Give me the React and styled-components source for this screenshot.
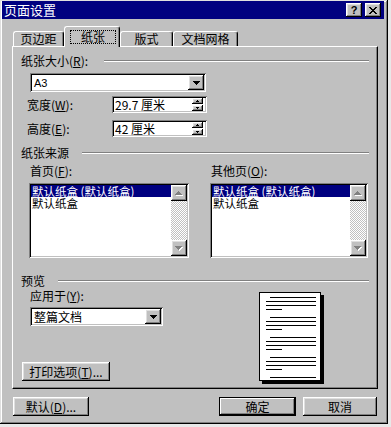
import React from "react"
import styled, { createGlobalStyle, css } from "styled-components"

const GlobalStyle = createGlobalStyle`
  html, body {
    margin: 0;
    padding: 0;
    background: #e8e8e8;
  }
  body {
    font-family: "Noto Sans CJK SC", "Liberation Sans", sans-serif;
    font-size: 12px;
    color: #000;
  }
  u { text-decoration: underline; text-underline-offset: 1px; }
`

const raised = css`
  background: #c0c0c0;
  box-shadow: inset -1px -1px #000, inset 1px 1px #fff, inset -2px -2px #808080, inset 2px 2px #dfdfdf;
`

const sunken = css`
  background: #fff;
  box-shadow: inset 1px 1px #808080, inset -1px -1px #fff, inset 2px 2px #000, inset -2px -2px #c0c0c0;
`

const Window = styled.div`
  box-sizing: border-box;
  width: 388px;
  height: 424px;
  padding: 1px 4px 4px 2px;
  background: #c0c0c0;
  box-shadow: inset -1px -1px #000, inset 1px 1px #dfdfdf, inset -2px -2px #808080, inset 2px 2px #fff;
  display: flex;
  flex-direction: column;
`

const TitleBar = styled.div`
  height: 18px;
  background: #000080;
  display: flex;
  align-items: center;
  padding: 0 3px 0 2px;
`

const TitleText = styled.div`
  flex: 1;
  color: #fff;
  font-size: 13px;
  line-height: 18px;
`

const TitleButton = styled.div`
  ${raised};
  box-sizing: border-box;
  width: 16px;
  height: 14px;
  margin-left: ${p => p.$gap || 0}px;
  display: flex;
  align-items: center;
  justify-content: center;
  font-family: "Liberation Sans", sans-serif;
  font-weight: bold;
  font-size: 11px;
  line-height: 11px;
`

const Body = styled.div`
  padding: 0 6px 0 10px;
  display: flex;
  flex-direction: column;
`

const TabStrip = styled.div`
  margin-top: 7px;
  height: 20px;
  padding-left: 1px;
  display: flex;
  align-items: flex-end;
`

const Tab = styled.div`
  box-sizing: border-box;
  position: relative;
  z-index: ${p => (p.$active ? 2 : 0)};
  width: ${p => p.$w}px;
  height: ${p => (p.$active ? 21 : 15)}px;
  margin-bottom: ${p => (p.$active ? -1 : 0)}px;
  background: #c0c0c0;
  border-top: 1px solid #fff;
  border-left: 1px solid #fff;
  border-right: 1px solid #000;
  border-radius: 3px 3px 0 0;
  box-shadow: inset -1px 0 #808080;
  display: flex;
  align-items: ${p => (p.$active ? "flex-start" : "center")};
  justify-content: center;
  padding-top: ${p => (p.$active ? 3 : 0)}px;
  line-height: 12px;
`

const FocusLabel = styled.div`
  box-sizing: border-box;
  width: 46px;
  height: 14px;
  margin-left: 2px;
  border: 1px dotted #000;
  display: flex;
  align-items: center;
  justify-content: center;
`

const Panel = styled.div`
  box-sizing: border-box;
  height: 343px;
  border-top: 1px solid #fff;
  border-left: 1px solid #fff;
  border-right: 1px solid #000;
  border-bottom: 1px solid #000;
  box-shadow: inset -1px -1px #808080;
  display: flex;
  flex-direction: column;
`

const GroupHeader = styled.div`
  display: flex;
  align-items: center;
  height: 12px;
  margin-top: ${p => p.$top}px;
  padding-left: 8px;
  padding-right: 8px;
  line-height: 12px;
  gap: ${p => p.$gap || 13}px;
`

const Rule = styled.div`
  flex: 1;
  height: 0;
  border-top: 1px solid #808080;
  border-bottom: 1px solid #fff;
`

const Combo = styled.div`
  ${sunken};
  box-sizing: border-box;
  width: ${p => p.$w}px;
  height: 19px;
  margin-top: ${p => p.$top}px;
  margin-left: 17px;
  padding: 2px;
  display: flex;
  align-items: center;
`

const ComboText = styled.div`
  flex: 1;
  padding-left: 2px;
  line-height: 12px;
  font-size: ${p => p.$small ? 11 : 12}px;
  font-family: ${p => p.$small ? `"Liberation Sans", sans-serif` : "inherit"};
`

const DropButton = styled.div`
  ${raised};
  width: 16px;
  height: 15px;
  display: flex;
  align-items: center;
  justify-content: center;
`

const FieldRow = styled.div`
  display: flex;
  align-items: center;
  height: 17px;
  margin-top: ${p => p.$top}px;
  margin-left: 14px;
`

const FieldLabel = styled.div`
  width: 85px;
  line-height: 12px;
`

const SpinField = styled.div`
  ${sunken};
  box-sizing: border-box;
  width: 95px;
  height: 17px;
  padding: 2px 4px 2px 2px;
  display: flex;
  align-items: center;
`

const SpinText = styled.div`
  flex: 1;
  line-height: 12px;
  padding-left: 1px;
  white-space: pre;
`

const SpinStack = styled.div`
  display: flex;
  flex-direction: column;
  gap: 1px;
`

const SpinButton = styled.div`
  ${raised};
  width: 11px;
  height: 6px;
  display: flex;
  align-items: center;
  justify-content: center;
`

const Columns = styled.div`
  display: flex;
  margin-left: 16px;
  margin-top: 6px;
  gap: 21px;
`

const Column = styled.div`
  width: ${p => p.$w}px;
  display: flex;
  flex-direction: column;
`

const SubLabel = styled.div`
  line-height: 12px;
  padding-left: 1px;
  margin-bottom: 6px;
`

const ListBox = styled.div`
  ${sunken};
  box-sizing: border-box;
  height: 75px;
  padding: 2px;
  display: flex;
`

const ListRows = styled.div`
  flex: 1;
  min-width: 0;
  display: flex;
  flex-direction: column;
`

const ListRow = styled.div`
  height: 12px;
  line-height: 12px;
  font-size: 11.5px;
  padding-left: 1px;
  white-space: nowrap;
  background: ${p => (p.$sel ? "#000080" : "transparent")};
  color: ${p => (p.$sel ? "#fff" : "#000")};
`

const ScrollBar = styled.div`
  width: 16px;
  flex: none;
  display: flex;
  flex-direction: column;
  justify-content: space-between;
  background: repeating-conic-gradient(#c0c0c0 0 25%, #fff 0 50%) 0 0 / 2px 2px;
`

const ScrollButton = styled.div`
  ${raised};
  width: 16px;
  height: 16px;
  display: flex;
  align-items: center;
  justify-content: center;
`

const PreviewRow = styled.div`
  display: flex;
`

const PreviewLeft = styled.div`
  width: 246px;
  display: flex;
  flex-direction: column;
`

const ApplyLabel = styled.div`
  line-height: 12px;
  margin-top: 3px;
  margin-left: 17px;
`

const Button = styled.div`
  ${raised};
  box-sizing: border-box;
  width: ${p => p.$w}px;
  height: 19px;
  margin-top: ${p => p.$top || 0}px;
  margin-left: ${p => p.$left || 0}px;
  display: flex;
  align-items: center;
  justify-content: center;
  line-height: 12px;
  white-space: nowrap;
  ${p => p.$default && css`
    box-shadow: inset 0 0 0 1px #000, inset -2px -2px #000, inset 2px 2px #fff, inset -3px -3px #808080;
  `}
`

const Page = styled.div`
  box-sizing: border-box;
  width: 62px;
  height: 89px;
  margin-top: 5px;
  background: #fff;
  border: 1px solid #000;
  box-shadow: 3px 3px 0 #000;
`

const Footer = styled.div`
  display: flex;
  margin-top: 8px;
  padding: 0 1px;
  gap: 7px;
`

const Spacer = styled.div`
  flex: 1;
`

const DownTriangle = ({ color = "#000" }) => (
  <svg width="7" height="4" viewBox="0 0 7 4">
    <path d="M0 0h7v1h-1v1h-1v1h-1v1h-1v-1h-1v-1h-1v-1h-1z" fill={color} />
  </svg>
)

const TinyArrow = ({ up }) => (
  <svg width="3" height="2" viewBox="0 0 3 2">
    <path d={up ? "M1 0h1v1h1v1h-3v-1h1z" : "M0 0h3v1h-1v1h-1v-1h-1z"} fill="#000" />
  </svg>
)

const arrowUp = "M3 0h1v1h1v1h1v1h1v1h-7v-1h1v-1h1v-1h1z"
const arrowDown = "M0 0h7v1h-1v1h-1v1h-1v1h-1v-1h-1v-1h-1v-1h-1z"

const GrayArrow = ({ up }) => (
  <svg width="8" height="5" viewBox="0 0 8 5">
    <path transform="translate(1 1)" d={up ? arrowUp : arrowDown} fill="#fff" />
    <path d={up ? arrowUp : arrowDown} fill="#808080" />
  </svg>
)

const CloseGlyph = () => (
  <svg width="8" height="7" viewBox="0 0 8 7">
    <path
      d="M0 0h2v1h1v1h2v-1h1v-1h2v1h-1v1h-1v1h-1v1h1v1h1v1h1v1h-2v-1h-1v-1h-2v1h-1v1h-2v-1h1v-1h1v-1h1v-1h-1v-1h-1v-1h-1z"
      fill="#000"
    />
  </svg>
)

const PageLines = () => {
  const groups = [0, 20, 40, 60]
  return (
    <svg width="60" height="87" viewBox="0 0 60 87">
      {groups.map(g => (
        <g key={g} fill="#000">
          <rect x="10" y={4 + g} width="46" height="1" />
          <rect x="6" y={8 + g} width="50" height="1" />
          <rect x="6" y={12 + g} width="50" height="1" />
          <rect x="6" y={16 + g} width="16" height="1" />
        </g>
      ))}
      <rect x="10" y="84" width="46" height="1" fill="#000" />
    </svg>
  )
}

const Spin = ({ children }) => (
  <SpinField>
    <SpinText>{children}</SpinText>
    <SpinStack>
      <SpinButton><TinyArrow up /></SpinButton>
      <SpinButton><TinyArrow /></SpinButton>
    </SpinStack>
  </SpinField>
)

const List = ({ rows }) => (
  <ListBox>
    <ListRows>
      {rows.map((r, i) => (
        <ListRow key={i} $sel={i === 0}>{r}</ListRow>
      ))}
    </ListRows>
    <ScrollBar>
      <ScrollButton><GrayArrow up /></ScrollButton>
      <ScrollButton><GrayArrow /></ScrollButton>
    </ScrollBar>
  </ListBox>
)

const tabs = [
  { label: "页边距", w: 51 },
  { label: "纸张", w: 56, active: true },
  { label: "版式", w: 53 },
  { label: "文档网格", w: 65 },
]

const trays = ["默认纸盒 (默认纸盒)", "默认纸盒"]

export default function App() {
  return (
    <>
      <GlobalStyle />
      <Window>
        <TitleBar>
          <TitleText>页面设置</TitleText>
          <TitleButton>?</TitleButton>
          <TitleButton $gap={3}><CloseGlyph /></TitleButton>
        </TitleBar>

        <Body>
          <TabStrip>
            {tabs.map(t => (
              <Tab key={t.label} $w={t.w} $active={t.active}>
                {t.active ? <FocusLabel>{t.label}</FocusLabel> : t.label}
              </Tab>
            ))}
          </TabStrip>

          <Panel>
            <GroupHeader $top={8} $gap={16}>
              <span>纸张大小(<u>R</u>):</span>
              <Rule />
            </GroupHeader>

            <Combo $w={176} $top={6}>
              <ComboText $small>A3</ComboText>
              <DropButton><DownTriangle /></DropButton>
            </Combo>

            <FieldRow $top={4}>
              <FieldLabel>宽度(<u>W</u>):</FieldLabel>
              <Spin>29.7 厘米</Spin>
            </FieldRow>
            <FieldRow $top={7}>
              <FieldLabel>高度(<u>E</u>):</FieldLabel>
              <Spin>42 厘米</Spin>
            </FieldRow>

            <GroupHeader $top={10}>
              <span>纸张来源</span>
              <Rule />
            </GroupHeader>

            <Columns>
              <Column $w={160}>
                <SubLabel>首页(<u>F</u>):</SubLabel>
                <List rows={trays} />
              </Column>
              <Column $w={158}>
                <SubLabel>其他页(<u>O</u>):</SubLabel>
                <List rows={trays} />
              </Column>
            </Columns>

            <GroupHeader $top={17}>
              <span>预览</span>
              <Rule />
            </GroupHeader>

            <PreviewRow>
              <PreviewLeft>
                <ApplyLabel>应用于(<u>Y</u>):</ApplyLabel>
                <Combo $w={133} $top={5}>
                  <ComboText>整篇文档</ComboText>
                  <DropButton><DownTriangle /></DropButton>
                </Combo>
                <Button $w={88} $top={36} $left={9}>打印选项(<u>T</u>)...</Button>
              </PreviewLeft>
              <Page><PageLines /></Page>
            </PreviewRow>
          </Panel>

          <Footer>
            <Button $w={76}>默认(<u>D</u>)...</Button>
            <Spacer />
            <Button $w={77} $default>确定</Button>
            <Button $w={74}>取消</Button>
          </Footer>
        </Body>
      </Window>
    </>
  )
}
